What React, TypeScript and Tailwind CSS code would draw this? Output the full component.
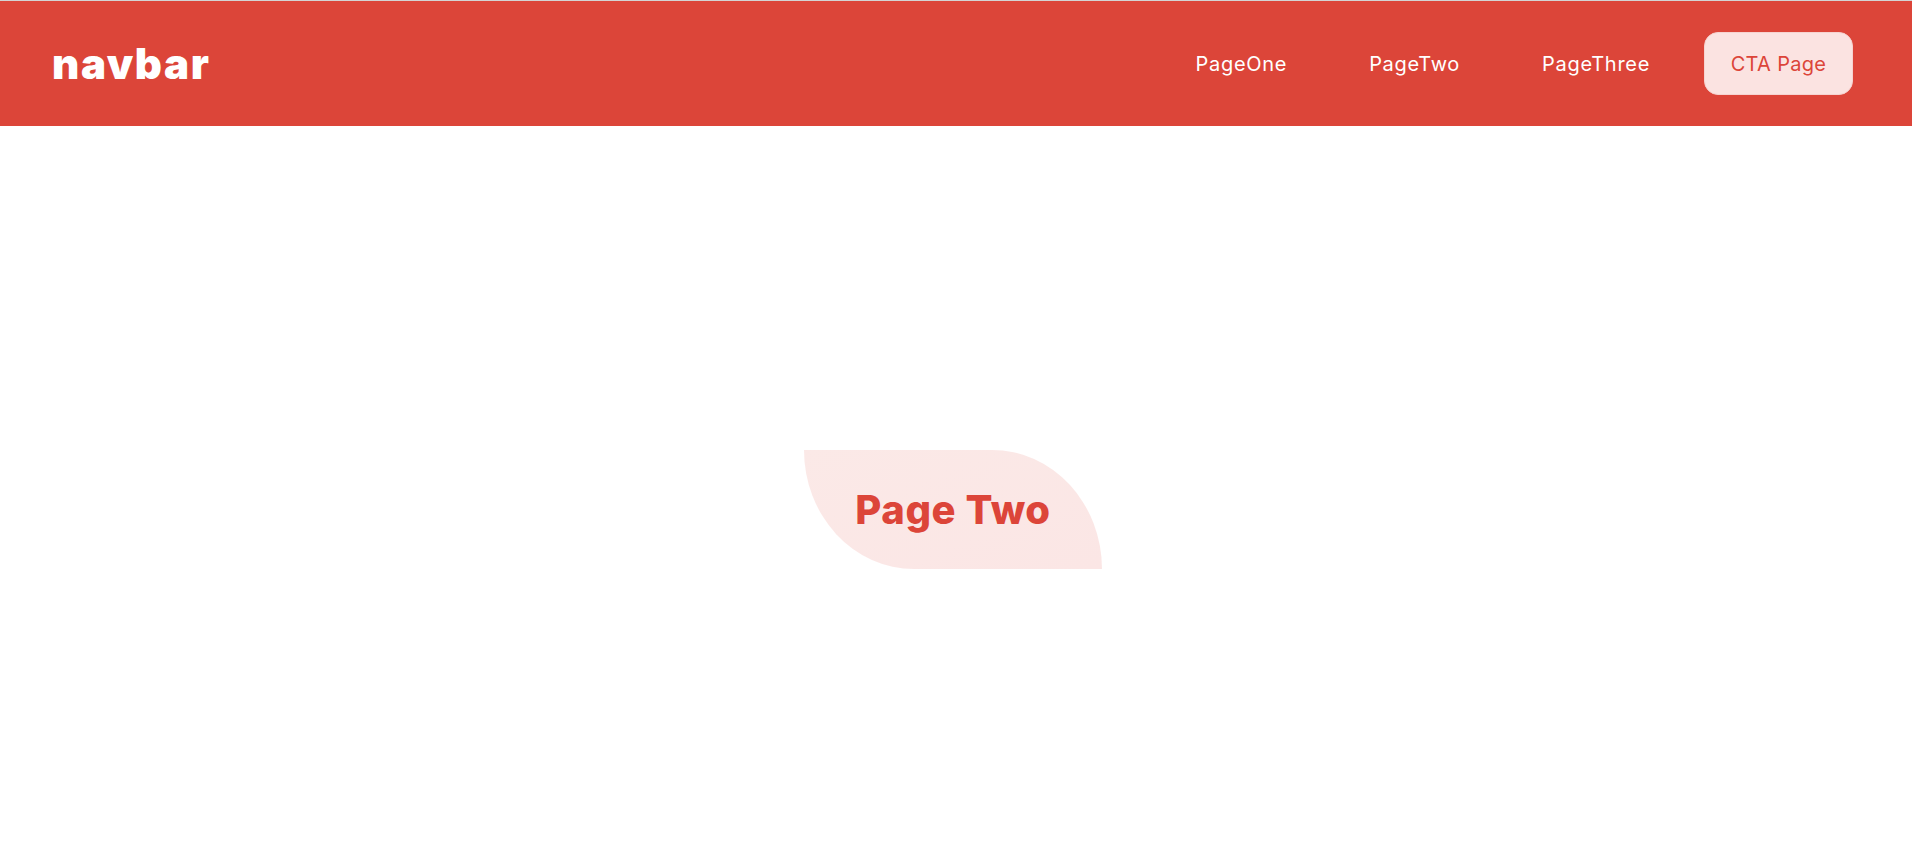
export default function App() {
  return (
    <div className="min-h-screen bg-white border-t border-[#d4d4d4] font-['Inter',sans-serif]">
      <Navbar />
      <main className="flex justify-center pt-[324px] pr-[6px]">
        <PageBadge title="Page Two" />
      </main>
    </div>
  );
}

function Navbar() {
  const links = ["PageOne", "PageTwo", "PageThree"];
  return (
    <nav className="flex items-center justify-between h-[125px] bg-[#dc4539] pl-[52px] pr-[59px]">
      <h1 className="text-[42px] font-black text-white tracking-[1.6px]">navbar</h1>
      <ul className="flex items-center gap-[26px]">
        {links.map((link) => (
          <li key={link}>
            <a href="#" className="px-7 text-[20px] text-white tracking-[0.7px]">
              {link}
            </a>
          </li>
        ))}
        <li>
          <a
            href="#"
            className="flex items-center justify-center h-[63px] w-[149px] rounded-[14px] border border-[#f6d3d0] bg-[#fbe3e1] text-[20px] text-[#dc4539] tracking-[0.3px]"
          >
            CTA Page
          </a>
        </li>
      </ul>
    </nav>
  );
}

function PageBadge({ title = "" }) {
  return (
    <div className="flex items-center justify-center w-[298px] h-[119px] rounded-tr-[110px_119px] rounded-bl-[110px_119px] bg-gradient-to-br from-[#fbe9e7] to-[#fbe6e5]">
      <h2 className="text-[40px] font-extrabold text-[#dc4539] tracking-[0.6px]">{title}</h2>
    </div>
  );
}
